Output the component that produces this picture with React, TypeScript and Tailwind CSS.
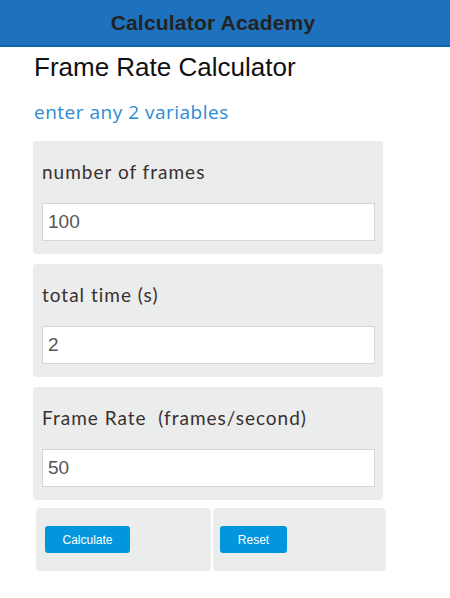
const fields = [
  { label: "number of frames", value: "100" },
  { label: "total time (s)", value: "2" },
  { label: "Frame Rate\u00a0\u00a0(frames/second)", value: "50" },
];

function Field({ label, value }: { label: string; value: string }) {
  return (
    <div className="w-[350px] rounded-[4px] bg-[#ebecec] px-[9px] pb-[13px] pt-[19px]">
      <p className="mb-[19px] font-['Lato',sans-serif] text-[19px] leading-[24px] tracking-[1px] text-[#3a3030]">
        {label}
      </p>
      <input
        readOnly
        value={value}
        className="block h-[38px] w-[333px] border border-[#d6d6d6] bg-white px-[5px] font-['Liberation_Sans',Arial,sans-serif] text-[19px] text-[#555] outline-none"
      />
    </div>
  );
}

export default function App() {
  return (
    <div className="min-h-[598px] w-[450px] bg-white font-['Liberation_Sans',Arial,sans-serif]">
      <header className="flex h-[47px] items-center justify-center border-b-2 border-[#0d63b0] bg-[#1e72bd] pr-[24px]">
        <h1 className="text-[21px] font-bold tracking-[0.2px] text-[#222]">Calculator Academy</h1>
      </header>
      <main className="px-[33px]">
        <h2 className="mt-[5px] pl-px text-[26px] leading-[30px] text-[#111]">Frame Rate Calculator</h2>
        <p className="mt-[17px] pl-px font-['Open_Sans',sans-serif] text-[19px] leading-[26px] tracking-[0.5px] text-[#2b8ad4]">
          enter any 2 variables
        </p>
        <div className="mt-[16px] flex flex-col gap-[10px]">
          {fields.map((f) => (
            <Field key={f.value} label={f.label} value={f.value} />
          ))}
        </div>
        <div className="ml-[3px] mt-[8px] flex w-[350px] gap-[2px]">
          <div className="flex h-[63px] flex-1 items-center rounded-[4px] bg-[#ebecec] pl-[9px]">
            <button className="h-[27px] w-[85px] rounded-[3px] bg-[#0496dc] text-[12px] text-white">
              Calculate
            </button>
          </div>
          <div className="flex h-[63px] flex-1 items-center rounded-[4px] bg-[#ebecec] pl-[7px]">
            <button className="h-[27px] w-[67px] rounded-[3px] bg-[#0496dc] text-[12px] text-white">
              Reset
            </button>
          </div>
        </div>
      </main>
    </div>
  );
}
